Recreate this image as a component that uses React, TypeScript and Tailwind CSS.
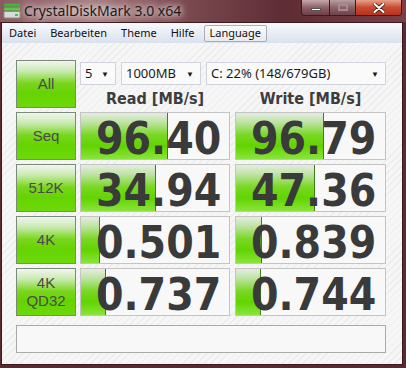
import React from 'react'

const rows = [
  { label: ['Seq'], read: '96.40', readPct: 0.59, write: '96.79', writePct: 0.59 },
  { label: ['512K'], read: '34.94', readPct: 0.51, write: '47.36', writePct: 0.53 },
  { label: ['4K'], read: '0.501', readPct: 0.13, write: '0.839', writePct: 0.175 },
  { label: ['4K', 'QD32'], read: '0.737', readPct: 0.17, write: '0.744', writePct: 0.17 },
]

const menuItems = ['Datei', 'Bearbeiten', 'Theme', 'Hilfe']

function GreenButton({ lines }: { lines: string[] }) {
  return (
    <div className="w-[60px] h-[48px] shrink-0 border border-[#7b8a78] bg-[linear-gradient(to_bottom,#f2f5f0_0%,#c9eab0_22%,#7ad61e_48%,#64d400_70%,#6ed80a_100%)] flex flex-col items-center justify-center text-[15px] leading-[18px] text-[#4a4a4a] font-['Liberation_Sans',sans-serif]">
      {lines.map((l) => (
        <span key={l}>{l}</span>
      ))}
    </div>
  )
}

function ValueBox({ value, pct, width }: { value: string; pct: number; width: string }) {
  return (
    <div className={`relative h-[48px] shrink-0 border border-[#c4c4c4] bg-[#f8f8f8] ${width}`}>
      <div
        className="absolute left-0 top-0 bottom-0 border-r border-[#3f7f1e] bg-[linear-gradient(to_bottom,#e4ede0_0%,#bfe3a4_20%,#78d824_48%,#62d400_72%,#8ae43c_100%)]"
        style={{ width: `${pct * 100}%` }}
      />
      <div className="relative h-full flex items-center pl-[15px] pt-[5px] text-[44px] leading-none font-bold text-[#3a3a3a] font-['DejaVu_Sans_Condensed','Liberation_Sans',sans-serif]">
        {value}
      </div>
    </div>
  )
}

function Select({ text, width }: { text: string; width: string }) {
  return (
    <div className={`h-[23px] shrink-0 border border-[#cfd3dc] bg-[#fafafa] flex items-center justify-between pl-[4px] pr-[6px] text-[13px] text-[#1a1a1a] ${width}`}>
      <span>{text}</span>
      <span className="text-[8px]">▼</span>
    </div>
  )
}

export default function App() {
  return (
    <div className="w-[406px] h-[368px] overflow-hidden bg-[#5b2a31] font-['Noto_Sans','Open_Sans',sans-serif]">
      {/* Title bar */}
      <div className="h-[22px] flex items-start bg-[linear-gradient(to_right,#8a5a60_0%,#a77e83_22%,#7c4a51_45%,#5e2c34_70%,#7a3f47_100%)]">
        <svg width="18" height="16" viewBox="0 0 18 16" className="ml-[3px] mt-[3px]">
          <rect x="1" y="0.5" width="16" height="3" rx="1" fill="#3fb53a" />
          <rect x="1" y="4.5" width="16" height="3" rx="1" fill="#58c94c" />
          <rect x="1" y="8.5" width="16" height="6.5" rx="1" fill="#d8dcd8" stroke="#8a8f8a" />
          <rect x="12" y="11" width="3" height="2" fill="#4fbf3f" />
        </svg>
        <span className="ml-[3px] mt-[1px] text-[14px] leading-[20px] text-[#1a1a1a] [text-shadow:0_0_6px_#fff,0_0_10px_#f4e8ea]">
          CrystalDiskMark 3.0 x64
        </span>
        <div className="ml-auto mr-[4px] flex h-[16px] border border-t-0 border-[#3a1a1f] rounded-b-[4px] overflow-hidden">
          <div className="w-[28px] flex items-center justify-center border-r border-[#3a1a1f] bg-[linear-gradient(to_bottom,#c6a9ad,#8d6167_50%,#6e3f46)]">
            <div className="w-[10px] h-[3px] bg-white border border-[#555] mt-[4px]" />
          </div>
          <div className="w-[26px] flex items-center justify-center border-r border-[#3a1a1f] bg-[linear-gradient(to_bottom,#b89ea2,#8a636a_50%,#6e4349)]">
            <div className="w-[10px] h-[7px] border-2 border-[#a48a8e]" />
          </div>
          <div className="w-[45px] flex items-center justify-center bg-[linear-gradient(to_bottom,#e8a08a,#c74b30_50%,#b8321c)]">
            <svg width="12" height="10" viewBox="0 0 12 10">
              <path d="M1.5 1 L10.5 9 M10.5 1 L1.5 9" stroke="#4a1a14" strokeWidth="3.6" strokeLinecap="round" />
              <path d="M1.5 1 L10.5 9 M10.5 1 L1.5 9" stroke="#fff" strokeWidth="2" strokeLinecap="round" />
            </svg>
          </div>
        </div>
      </div>

      {/* Client area */}
      <div className="ml-[1px] w-[402px] h-[343px] border border-[#3a1a1f] bg-[#f3f3f3] flex flex-col">
        {/* Menu bar */}
        <div className="h-[20px] flex items-center gap-[14px] pl-[7px] text-[11px] text-[#111] bg-[linear-gradient(to_bottom,#f7f9fc,#e6ebf3_60%,#d9e1ec)]">
          {menuItems.map((m) => (
            <span key={m}>{m}</span>
          ))}
          <span className="-ml-[5px] h-[17px] px-[5px] flex items-center border border-[#a9aeb6] rounded-[2px] bg-[linear-gradient(to_bottom,#fbfbfc,#e6e9ee)]">
            Language
          </span>
        </div>

        {/* Content */}
        <div className="flex-1 pl-[14px] pt-[17px] bg-[repeating-linear-gradient(135deg,#f6f6f6_0px,#f6f6f6_4px,#ececec_4px,#ececec_5px)]">
          <div className="flex gap-[4px]">
            <GreenButton lines={['All']} />
            <div className="flex flex-col">
              <div className="flex gap-[5px] mt-[2px]">
                <Select text="5" width="w-[36px]" />
                <Select text="1000MB" width="w-[80px]" />
                <Select text="C: 22% (148/679GB)" width="w-[180px]" />
              </div>
              <div className="flex gap-[5px] mt-[5px] text-[16px] font-bold text-[#3d3d3d] font-['DejaVu_Sans_Condensed','DejaVu_Sans',sans-serif] leading-[18px]">
                <div className="w-[150px] text-center">Read [MB/s]</div>
                <div className="w-[151px] text-center">Write [MB/s]</div>
              </div>
            </div>
          </div>

          <div className="flex flex-col gap-[4px] mt-[4px]">
            {rows.map((r) => (
              <div key={r.read} className="flex">
                <GreenButton lines={r.label} />
                <div className="ml-[4px]">
                  <ValueBox value={r.read} pct={r.readPct} width="w-[150px]" />
                </div>
                <div className="ml-[5px]">
                  <ValueBox value={r.write} pct={r.writePct} width="w-[151px]" />
                </div>
              </div>
            ))}
          </div>

          <div className="mt-[9px] w-[370px] h-[28px] border border-[#a9a9a9] bg-[#f8f8f8]" />
        </div>
      </div>
    </div>
  )
}
